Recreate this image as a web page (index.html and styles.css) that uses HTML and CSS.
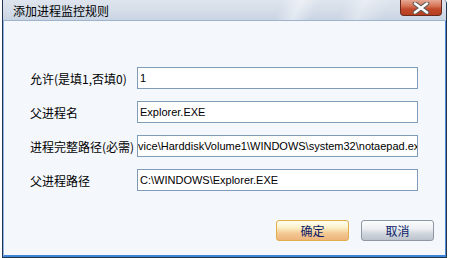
FILE: index.html
```html
<html>
    <head>
        <title>添加进程监控规则</title>
        <link rel="stylesheet" href="styles.css">
    </head>
    <body>
        <div class="dialog">
            <div class="dialog-title">
                <span class="dialog-caption">添加进程监控规则</span>
                <div class="dialog-close">
                    <svg width="22" height="12" viewBox="0 0 22 12">
                        <path d="M5 1.5 L17 10.5 M17 1.5 L5 10.5" stroke="#5a5a5a" stroke-width="4.6" stroke-linecap="round"/>
                        <path d="M5 1.5 L17 10.5 M17 1.5 L5 10.5" stroke="#ffffff" stroke-width="2.6" stroke-linecap="round"/>
                    </svg>
                </div>
            </div>
            <div class="dialog-body">
                <div class="rule-form">
                    <label>允许(是填1,否填0)</label>
                    <div class="field">1</div>

                    <label>父进程名</label>
                    <div class="field">Explorer.EXE</div>

                    <label>进程完整路径(必需)</label>
                    <div class="field"><span class="field-scroll">\Device\HarddiskVolume1\WINDOWS\system32\notaepad.exe</span></div>

                    <label>父进程路径</label>
                    <div class="field">C:\WINDOWS\Explorer.EXE</div>
                </div>
                <div class="dialog-buttons">
                    <button class="btn btn-ok">确定</button>
                    <button class="btn btn-cancel">取消</button>
                </div>
            </div>
        </div>
    </body>
</html>
```

FILE: styles.css
```css
body {
    margin: 0;
    background: #ffffff;
    font-family: "Noto Sans CJK SC", sans-serif;
    font-size: 12px;
}

.dialog {
    margin-left: 2px;
    width: 445px;
    height: 258px;
    box-sizing: border-box;
    border-left: 1px solid #22344f;
    border-right: 1px solid #22344f;
    border-bottom: 1px solid #22344f;
    border-top-right-radius: 4px;
    display: flex;
    flex-direction: column;
}

.dialog-title {
    height: 21px;
    box-sizing: border-box;
    display: flex;
    align-items: flex-start;
    border-bottom: 1px solid #9fb3cf;
    border-top-right-radius: 4px;
    background:
        linear-gradient(115deg, rgba(255,255,255,0) 0%, rgba(255,255,255,0) 62%, rgba(255,255,255,0.45) 66%, rgba(255,255,255,0) 70%, rgba(255,255,255,0) 76%, rgba(255,255,255,0.35) 80%, rgba(255,255,255,0) 86%),
        linear-gradient(to bottom, #dfe5ee, #d3dce8 60%, #c9d4e3);
}

.dialog-caption {
    padding-left: 10px;
    line-height: 22px;
    color: #000000;
    flex: 1;
}

.dialog-close {
    width: 42px;
    height: 16px;
    box-sizing: border-box;
    margin-right: 4px;
    border: 1px solid #6b2a1e;
    border-top: none;
    border-radius: 0 0 4px 4px;
    background: linear-gradient(to bottom, #e6a894, #d57556 40%, #c24a2c 60%, #b5401f);
    display: flex;
    align-items: center;
    justify-content: center;
}

.dialog-body {
    flex: 1;
    background: #f4f7fc;
    border-left: 1px solid #8fb6e6;
    border-right: 1px solid #4b8ad4;
    border-bottom: 2px solid #3d84d6;
    padding: 46px 11px 0 26px;
    display: flex;
    flex-direction: column;
}

.rule-form {
    display: grid;
    grid-template-columns: 107px 281px;
    grid-auto-rows: 22px;
    row-gap: 12px;
    align-items: center;
}

.rule-form label {
    color: #000000;
    white-space: nowrap;
}

.field {
    height: 22px;
    box-sizing: border-box;
    border: 1px solid #7f9db9;
    background: #ffffff;
    padding-left: 2px;
    font-family: "Liberation Sans", sans-serif;
    font-size: 11px;
    line-height: 20px;
    white-space: nowrap;
    overflow: hidden;
}

.field-scroll {
    display: inline-block;
    margin-left: -19px;
}

.dialog-buttons {
    display: flex;
    justify-content: flex-end;
    gap: 12px;
    margin-top: 29px;
}

.btn {
    width: 73px;
    height: 21px;
    box-sizing: border-box;
    border-radius: 3px;
    font-family: "Noto Sans CJK SC", sans-serif;
    font-size: 12px;
    color: #0b1a66;
    padding: 0;
}

.btn-ok {
    border: 1px solid #e0ae4a;
    background: linear-gradient(to bottom, #fffef2, #fbf0c8 35%, #f3c993 65%, #eeb47c);
}

.btn-cancel {
    border: 1px solid #8e97a3;
    background: linear-gradient(to bottom, #fbfcfd, #eceff3 40%, #d2d7de 65%, #bcc3cc);
}
```
